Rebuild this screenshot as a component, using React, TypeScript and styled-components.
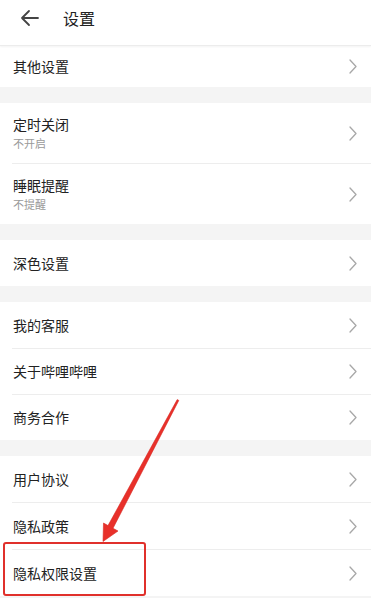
import React from "react";
import styled, { createGlobalStyle } from "styled-components";

const Global = createGlobalStyle`
  html, body { margin: 0; padding: 0; background: #ffffff; overflow: hidden; }
  body { font-family: "Noto Sans CJK SC", "Noto Sans", sans-serif; }
`;

const Page = styled.div`
  position: relative;
  width: 371px;
  height: 598px;
  overflow: hidden;
  background: #f4f4f4;
`;

const Header = styled.div`
  height: 46px;
  display: flex;
  align-items: flex-start;
  padding: 8px 0 0 20px;
  box-sizing: border-box;
  gap: 24px;
  background: #fff;
  border-bottom: 1px solid #ececec;
  box-shadow: 0 1px 2px rgba(0, 0, 0, 0.05);
  position: relative;
  z-index: 1;
`;

const BackIcon = styled.svg`
  width: 19px;
  height: 20px;
  flex: none;
`;

const Title = styled.div`
  font-size: 16px;
  line-height: 20px;
  color: #222;
`;

const Group = styled.div`
  background: #fff;
  display: flex;
  flex-direction: column;
`;

const Band = styled.div<{ $h: number }>`
  height: ${(p) => p.$h}px;
  background: #f4f4f4;
`;

const Row = styled.div<{ $h: number }>`
  height: ${(p) => p.$h}px;
  display: flex;
  align-items: center;
  justify-content: space-between;
  padding: 0 14px 0 13px;
  background: #fff;
`;

const Texts = styled.div`
  display: flex;
  flex-direction: column;
`;

const Label = styled.div`
  font-size: 14px;
  line-height: 19px;
  color: #222;
`;

const Sub = styled.div`
  font-size: 11px;
  line-height: 15px;
  color: #9a9a9a;
  margin-top: 2px;
`;

const Divider = styled.div`
  height: 1px;
  margin-left: 12px;
  background: #ededed;
`;

const Chevron = styled.svg`
  width: 8px;
  height: 15px;
  flex: none;
`;

const HighlightBox = styled.div`
  position: absolute;
  left: 3px;
  top: 542px;
  width: 143px;
  height: 54px;
  box-sizing: border-box;
  border: 2.5px solid #e0302b;
  border-radius: 3px;
  pointer-events: none;
`;

const Overlay = styled.svg`
  position: absolute;
  left: 0;
  top: 0;
  width: 371px;
  height: 598px;
  pointer-events: none;
`;

type Item = { label: string; sub?: string; h: number };

const groups: { band: number; items: Item[] }[] = [
  { band: 0, items: [{ label: "其他设置", h: 41 }] },
  {
    band: 16,
    items: [
      { label: "定时关闭", sub: "不开启", h: 60 },
      { label: "睡眠提醒", sub: "不提醒", h: 60 },
    ],
  },
  { band: 16, items: [{ label: "深色设置", h: 46 }] },
  {
    band: 16,
    items: [
      { label: "我的客服", h: 46 },
      { label: "关于哔哩哔哩", h: 45 },
      { label: "商务合作", h: 45 },
    ],
  },
  {
    band: 16,
    items: [
      { label: "用户协议", h: 46 },
      { label: "隐私政策", h: 46 },
      { label: "隐私权限设置", h: 46 },
    ],
  },
];

const ChevronIcon = () => (
  <Chevron viewBox="0 0 8 15">
    <path d="M1 1 L7 7.5 L1 14" fill="none" stroke="#a8a8a8" strokeWidth="1.3" strokeLinecap="round" strokeLinejoin="round" />
  </Chevron>
);

export default function App() {
  return (
    <>
      <Global />
      <Page>
        <Header>
          <BackIcon viewBox="0 0 19 20">
            <path d="M18 10 H2 M9 3 L2 10 L9 17" fill="none" stroke="#444" strokeWidth="1.8" strokeLinecap="round" strokeLinejoin="round" />
          </BackIcon>
          <Title>设置</Title>
        </Header>
        {groups.map((g, gi) => (
          <React.Fragment key={gi}>
            {g.band > 0 && <Band $h={g.band} />}
            <Group>
              {g.items.map((it, i) => (
                <React.Fragment key={it.label}>
                  {i > 0 && <Divider />}
                  <Row $h={it.h}>
                    <Texts>
                      <Label>{it.label}</Label>
                      {it.sub && <Sub>{it.sub}</Sub>}
                    </Texts>
                    <ChevronIcon />
                  </Row>
                </React.Fragment>
              ))}
            </Group>
          </React.Fragment>
        ))}
        <HighlightBox />
        <Overlay viewBox="0 0 371 598">
          <polygon
            points="178.8,400.4 113,528.3 118,531 103,541.5 103.5,523 108,525.6 177.2,399.6"
            fill="#e8302a"
            stroke="#d92a24"
            strokeWidth="0.6"
            strokeLinejoin="round"
          />
        </Overlay>
      </Page>
    </>
  );
}
